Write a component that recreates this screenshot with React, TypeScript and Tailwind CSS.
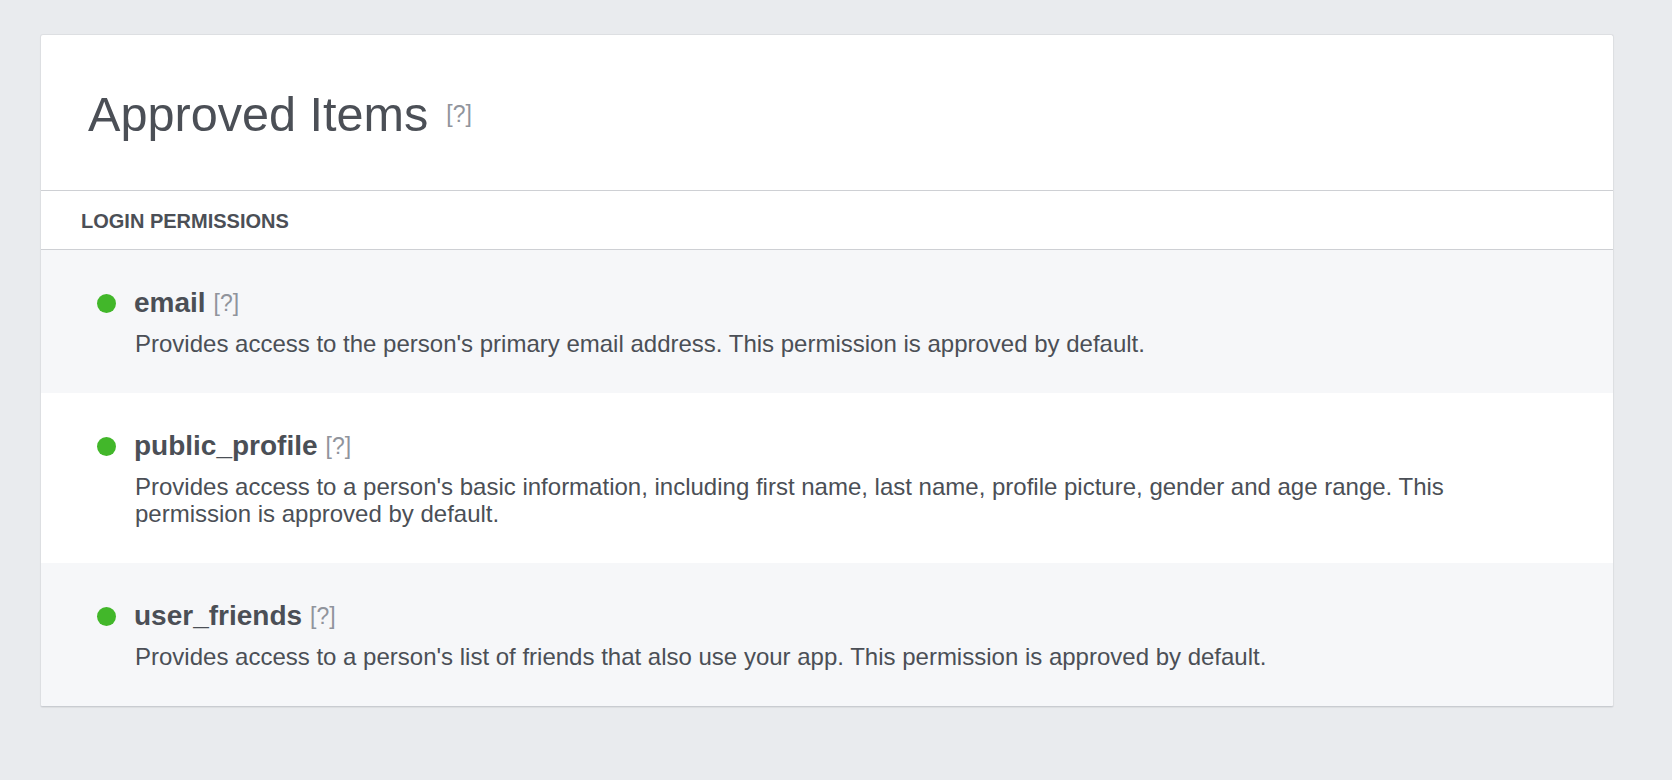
const permissions = [
  {
    name: "email",
    text: "Provides access to the person's primary email address. This permission is approved by default.",
    shaded: true,
  },
  {
    name: "public_profile",
    text: "Provides access to a person's basic information, including first name, last name, profile picture, gender and age range. This permission is approved by default.",
    shaded: false,
  },
  {
    name: "user_friends",
    text: "Provides access to a person's list of friends that also use your app. This permission is approved by default.",
    shaded: true,
  },
];

function Help() {
  return <span className="text-[23px] font-normal text-[#90949c]">[?]</span>;
}

export default function App() {
  return (
    <div className="min-h-[780px] bg-[#e9ebee] pt-[34px] pl-[40px] font-['Liberation_Sans',Arial,sans-serif] text-[#4b4f56]">
      <div className="w-[1574px] overflow-hidden rounded-[3px] border border-[#dddfe2] border-b-[#c9ccd1] bg-white shadow-[0_1px_1px_rgba(0,0,0,0.06)]">
        <div className="flex h-[155px] items-center gap-[18px] pl-[47px] pt-[4px]">
          <h1 className="text-[48.6px] leading-none font-normal">Approved Items</h1>
          <Help />
        </div>

        <div className="flex h-[60px] items-center border-y border-[#ced0d4] pl-[40px] pt-[2px]">
          <h2 className="text-[20px] font-bold">LOGIN PERMISSIONS</h2>
        </div>

        {permissions.map((p) => (
          <div
            key={p.name}
            className={`pl-[56px] pr-[120px] pt-[36px] pb-[36px] ${p.shaded ? "bg-[#f6f7f9]" : "bg-white"}`}
          >
            <div className="flex h-[34px] items-center">
              <span className="mr-[18px] h-[19px] w-[19px] shrink-0 rounded-full bg-[#42b72a]" />
              <span className="text-[28px] font-bold">{p.name}</span>
              <span className="ml-[8px]">
                <Help />
              </span>
            </div>
            <p className="mt-[10px] pl-[38px] text-[24px] leading-[27px]">{p.text}</p>
          </div>
        ))}
      </div>
    </div>
  );
}
